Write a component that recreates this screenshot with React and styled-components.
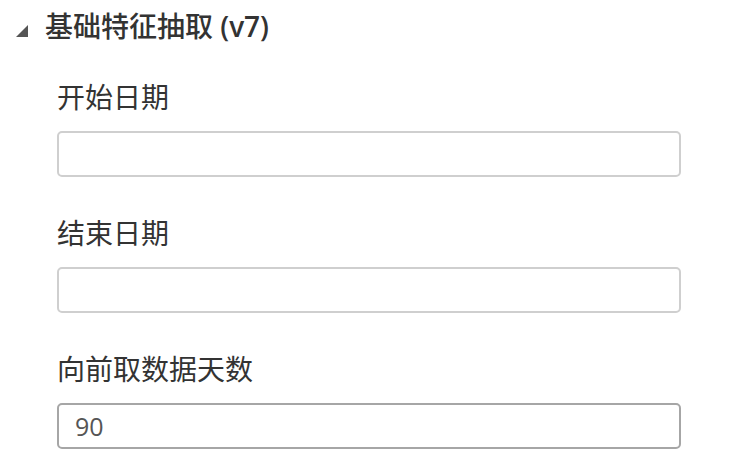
import styled, { createGlobalStyle } from "styled-components";

var Global = createGlobalStyle`
  body {
    margin: 0;
    background: #fff;
    font-family: "Open Sans", "Noto Sans CJK SC", sans-serif;
    color: #333;
  }
`;

var Panel = styled.div`
  width: 748px;
  height: 468px;
  overflow: hidden;
`;

var Header = styled.div`
  display: flex;
  align-items: center;
  height: 50px;
  padding-left: 16px;
  gap: 17px;
  font-size: 28px;
  font-weight: 500;
  color: #333;
`;

var Version = styled.span`
  font-weight: 600;
`;

var Fields = styled.div`
  padding: 30px 0 0 57px;
  width: 624px;
  display: flex;
  flex-direction: column;
  gap: 39px;
`;

var Field = styled.div`
  display: flex;
  flex-direction: column;
  gap: 17px;
`;

var Label = styled.label`
  font-size: 28px;
  line-height: 34px;
  color: #333;
`;

var Input = styled.input`
  box-sizing: border-box;
  height: 46px;
  width: 100%;
  border: 2px solid ${(p) => (p.$active ? "#a6a6a6" : "#cfcfcf")};
  border-radius: 5px;
  padding: 0 16px;
  font-family: "Open Sans", sans-serif;
  font-size: 25px;
  color: #555;
  outline: none;
`;

function Caret() {
  return (
    <svg width="12" height="12" viewBox="0 0 12 12" style={{ marginTop: 12 }}>
      <path d="M12 0 L12 12 L0 12 Z" fill="#555" />
    </svg>
  );
}

export default function App() {
  return (
    <Panel>
      <Global />
      <Header>
        <Caret />
        <span>
          基础特征抽取 <Version>(v7)</Version>
        </span>
      </Header>
      <Fields>
        <Field>
          <Label>开始日期</Label>
          <Input defaultValue="" />
        </Field>
        <Field>
          <Label>结束日期</Label>
          <Input defaultValue="" />
        </Field>
        <Field>
          <Label>向前取数据天数</Label>
          <Input $active defaultValue="90" />
        </Field>
      </Fields>
    </Panel>
  );
}
